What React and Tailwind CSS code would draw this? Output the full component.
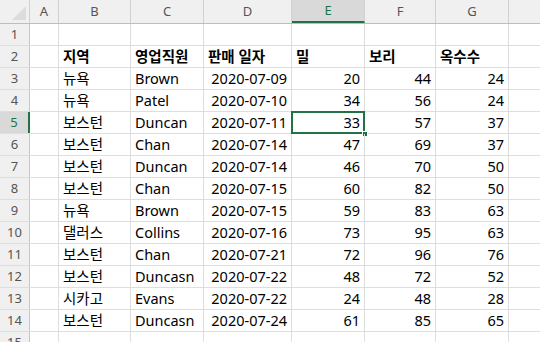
import React from 'react';

const cols = [
  { key: 'A', w: 'w-[29px]' },
  { key: 'B', w: 'w-[72px]' },
  { key: 'C', w: 'w-[73px]' },
  { key: 'D', w: 'w-[88px]' },
  { key: 'E', w: 'w-[73px]' },
  { key: 'F', w: 'w-[71px]' },
  { key: 'G', w: 'w-[73px]' },
  { key: 'H', w: 'w-[72px]' },
];

const data = [
  ['뉴욕', 'Brown', '2020-07-09', 20, 44, 24],
  ['뉴욕', 'Patel', '2020-07-10', 34, 56, 24],
  ['보스턴', 'Duncan', '2020-07-11', 33, 57, 37],
  ['보스턴', 'Chan', '2020-07-14', 47, 69, 37],
  ['보스턴', 'Duncan', '2020-07-14', 46, 70, 50],
  ['보스턴', 'Chan', '2020-07-15', 60, 82, 50],
  ['뉴욕', 'Brown', '2020-07-15', 59, 83, 63],
  ['댈러스', 'Collins', '2020-07-16', 73, 95, 63],
  ['보스턴', 'Chan', '2020-07-21', 72, 96, 76],
  ['보스턴', 'Duncasn', '2020-07-22', 48, 72, 52],
  ['시카고', 'Evans', '2020-07-22', 24, 48, 28],
  ['보스턴', 'Duncasn', '2020-07-24', 61, 85, 65],
];

const headers = ['지역', '영업직원', '판매 일자', '밀', '보리', '옥수수'];

const font = { fontFamily: '"Noto Sans", "Noto Sans CJK KR", sans-serif' };

const Cell = ({ w, children, align = 'left', bold, selected }) => (
  <div
    className={`${w} relative h-full shrink-0 border-r border-[#dedede] flex items-center px-[4px] text-[14.5px] text-black whitespace-nowrap ${align === 'right' ? 'justify-end' : ''} ${bold ? 'font-bold' : ''}`}
  >
    {children}
    {selected && (
      <>
        <div className="absolute -left-[1px] -top-[1px] -right-[1px] -bottom-[1px] border-2 border-[#217346]" />
        <div className="absolute -right-[4px] -bottom-[4px] w-[6px] h-[6px] bg-[#217346] border border-white" />
      </>
    )}
  </div>
);

const RowHeader = ({ n, active }) => (
  <div
    className={`w-[30px] shrink-0 h-full flex items-center justify-center text-[13px] ${active ? 'bg-[#d9d9d9] border-r-2 border-[#217346] text-[#217346]' : 'bg-[#f0f0f0] border-r border-[#c6c6c6] text-[#555]'}`}
  >
    {n}
  </div>
);

const Row = ({ n, cells, bold, active }) => (
  <div className="flex h-[22px] border-b border-[#dedede]">
    <RowHeader n={n} active={active} />
    {cols.map((c, i) => {
      const v = cells ? cells[i] : '';
      const right = typeof v === 'number';
      const isDate = typeof v === 'string' && /^\d{4}-/.test(v);
      return (
        <Cell
          key={c.key}
          w={c.w}
          align={right || isDate ? 'right' : 'left'}
          bold={bold}
          selected={active && c.key === 'E'}
        >
          {v}
        </Cell>
      );
    })}
  </div>
);

export default function App() {
  return (
    <div className="w-[540px] h-[342px] overflow-hidden bg-white" style={font}>
      <div className="flex h-[24px] border-b border-[#bdbdbd] bg-[#f0f0f0]">
        <div className="w-[30px] shrink-0 h-full border-r border-[#d0d0d0] relative">
          <div className="absolute right-[3px] bottom-[3px] w-0 h-0 border-l-[14px] border-l-transparent border-b-[14px] border-b-[#dcdcdc]" />
        </div>
        {cols.map((c) => (
          <div
            key={c.key}
            className={`${c.w} shrink-0 h-full flex items-center justify-center text-[13px] border-r ${c.key === 'E' ? 'bg-[#d9d9d9] text-[#217346] border-b-2 border-b-[#217346] border-r-[#d0d0d0]' : 'text-[#555] border-[#d0d0d0]'}`}
          >
            {c.key === 'H' ? '' : c.key}
          </div>
        ))}
      </div>
      <Row n={1} />
      <Row n={2} cells={['', ...headers]} bold />
      {data.map((r, i) => (
        <Row key={i} n={i + 3} cells={['', ...r]} active={i + 3 === 5} />
      ))}
      <Row n={15} />
    </div>
  );
}
